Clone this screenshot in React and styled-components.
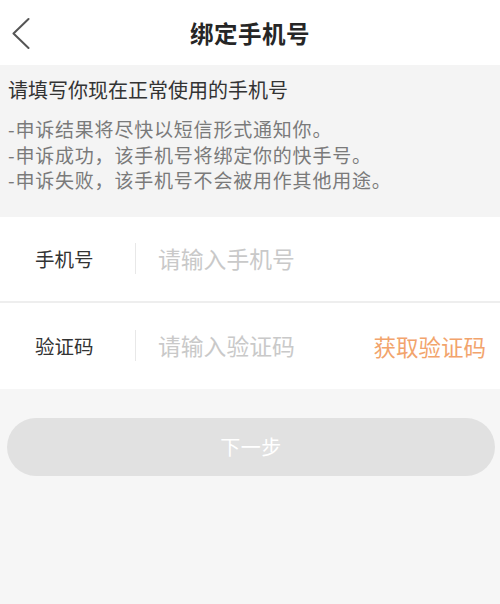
import React from "react";
import styled, { createGlobalStyle } from "styled-components";

const Global = createGlobalStyle`
  html, body { margin: 0; padding: 0; background: #f6f6f6; }
  body { font-family: "Noto Sans CJK SC", "Noto Sans", sans-serif; }
  * { box-sizing: border-box; }
`;

const Page = styled.div`
  width: 500px;
  min-height: 604px;
  background: #f6f6f6;
  display: flex;
  flex-direction: column;
`;

const Header = styled.header`
  height: 65px;
  background: #fff;
  display: grid;
  grid-template-columns: 60px 1fr 60px;
  align-items: center;
`;

const BackButton = styled.button`
  border: none;
  background: none;
  padding: 0 0 0 11px;
  height: 65px;
  display: flex;
  align-items: center;
  cursor: pointer;
`;

const Title = styled.h1`
  margin: 0;
  text-align: center;
  font-size: 23.5px;
  font-weight: 700;
  color: #262626;
  letter-spacing: 0.5px;
`;

const Notice = styled.section`
  background: #f4f4f4;
  padding: 12px 8px 24px;
  display: flex;
  flex-direction: column;
  gap: 13px;
`;

const Intro = styled.p`
  margin: 0;
  font-size: 20px;
  line-height: 26px;
  color: #333;
`;

const Bullets = styled.ul`
  margin: 0;
  padding: 0;
  list-style: none;
`;

const Bullet = styled.li`
  font-size: 19px;
  letter-spacing: 0.8px;
  line-height: 25.5px;
  color: #7a7a7a;
`;

const Form = styled.div`
  background: #fff;
  display: flex;
  flex-direction: column;
`;

const Row = styled.div`
  height: ${(p) => p.$h}px;
  display: flex;
  align-items: center;
  padding-left: 35px;
  padding-right: 14px;
  border-top: ${(p) => (p.$divided ? "2px solid #eeeeee" : "none")};
`;

const Label = styled.span`
  width: 100px;
  font-size: 19.5px;
  color: #333;
`;

const Separator = styled.span`
  width: 1px;
  height: 31px;
  background: #e8e8e8;
  margin-right: 22px;
`;

const Input = styled.input`
  flex: 1;
  min-width: 0;
  border: none;
  outline: none;
  background: transparent;
  font-family: inherit;
  font-size: 22.8px;
  color: #333;
  padding: 0;
  &::placeholder {
    color: #c9c9c9;
  }
`;

const CodeLink = styled.button`
  border: none;
  background: none;
  padding: 0;
  font-family: inherit;
  font-size: 22.5px;
  color: #f2a46c;
  cursor: pointer;
`;

const Actions = styled.div`
  padding: 29px 5px 0 7px;
`;

const NextButton = styled.button`
  width: 100%;
  height: 58px;
  border: none;
  border-radius: 29px;
  background: #e1e1e1;
  color: #fff;
  font-family: inherit;
  font-size: 20px;
  letter-spacing: 0.5px;
`;

const BackIcon = () => (
  <svg width="20" height="32" viewBox="0 0 20 32" fill="none">
    <path d="M17.5 2 L2.5 16.5 L17.5 31" stroke="#555" strokeWidth="2" strokeLinecap="round" strokeLinejoin="round" />
  </svg>
);

export default function App() {
  return (
    <>
      <Global />
      <Page>
        <Header>
          <BackButton aria-label="返回">
            <BackIcon />
          </BackButton>
          <Title>绑定手机号</Title>
          <span />
        </Header>
        <Notice>
          <Intro>请填写你现在正常使用的手机号</Intro>
          <Bullets>
            <Bullet>-申诉结果将尽快以短信形式通知你。</Bullet>
            <Bullet>-申诉成功，该手机号将绑定你的快手号。</Bullet>
            <Bullet>-申诉失败，该手机号不会被用作其他用途。</Bullet>
          </Bullets>
        </Notice>
        <Form>
          <Row $h={84}>
            <Label>手机号</Label>
            <Separator />
            <Input placeholder="请输入手机号" />
          </Row>
          <Row $h={88} $divided>
            <Label>验证码</Label>
            <Separator />
            <Input placeholder="请输入验证码" />
            <CodeLink>获取验证码</CodeLink>
          </Row>
        </Form>
        <Actions>
          <NextButton>下一步</NextButton>
        </Actions>
      </Page>
    </>
  );
}
